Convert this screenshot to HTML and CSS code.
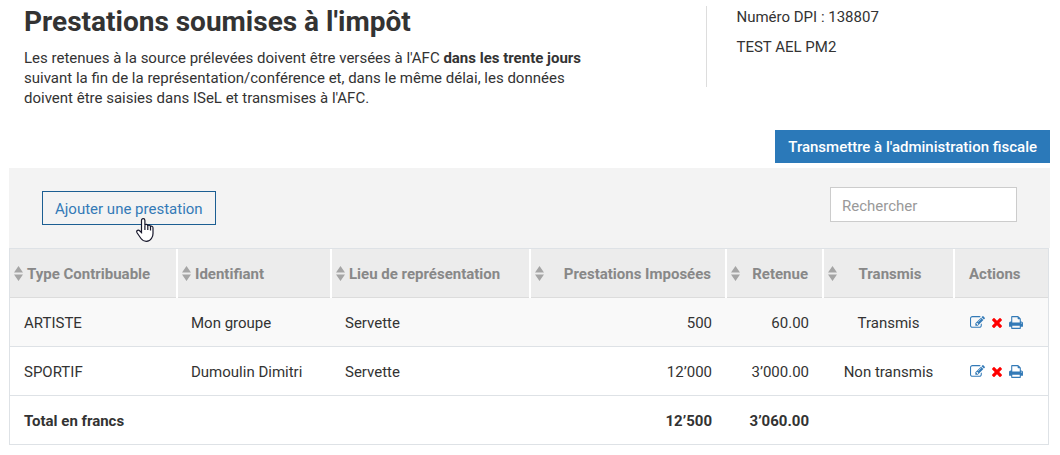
FILE: index.html
```html
<!DOCTYPE html>
<html lang="fr">
<head>
    <meta charset="UTF-8">
    <meta name="viewport" content="width=device-width, initial-scale=1.0">
    <title>Prestations soumises à l'impôt</title>
    <link rel="stylesheet" href="styles.css">
</head>
<body>
    <svg class="sprite" aria-hidden="true">
        <symbol id="icon-sort" viewBox="0 0 9 15">
            <path d="M4.500 0L9 6.500H0zM0 8.500H9L4.500 15z"/>
        </symbol>
        <symbol id="icon-edit" viewBox="0 0 1792 1792">
            <path d="M888 1184l116-116-152-152-116 116v56h96v96h56zm440-720q-16-16-33 1l-350 350q-17 17-1 33t33-1l350-350q17-17 1-33zm80 594v190q0 119-84.5 203.5t-203.5 84.5h-832q-119 0-203.5-84.5t-84.5-203.5v-832q0-119 84.5-203.5t203.5-84.5h832q63 0 117 25 15 7 18 23 3 17-9 29l-49 49q-14 14-32 8-23-6-45-6h-832q-66 0-113 47t-47 113v832q0 66 47 113t113 47h832q66 0 113-47t47-113v-126q0-13 9-22l64-64q15-15 35-7t20 29zm-96-738l288 288-672 672h-288v-288zm444 132l-92 92-288-288 92-92q28-28 68-28t68 28l152 152q28 28 28 68t-28 68z"/>
        </symbol>
        <symbol id="icon-delete" viewBox="192 0 1408 1792">
            <path d="M1490 1322q0 40-28 68l-136 136q-28 28-68 28t-68-28l-294-294-294 294q-28 28-68 28t-68-28l-136-136q-28-28-28-68t28-68l294-294-294-294q-28-28-28-68t28-68l136-136q28-28 68-28t68 28l294 294 294-294q28-28 68-28t68 28l136 136q28 28 28 68t-28 68l-294 294 294 294q28 28 28 68z"/>
        </symbol>
        <symbol id="icon-print" viewBox="64 0 1664 1792">
            <path d="M448 1536h896v-256h-896v256zm0-640h896v-384h-160q-40 0-68-28t-28-68v-160h-640v640zm1152 64q0-26-19-45t-45-19-45 19-19 45 19 45 45 19 45-19 19-45zm128 0v416q0 13-9.5 22.5t-22.5 9.5h-224v160q0 40-28 68t-68 28h-960q-40 0-68-28t-28-68v-160h-224q-13 0-22.5-9.5t-9.500-22.500v-416q0-79 56.500-135.500t135.500-56.500h64v-544q0-40 28-68t68-28h672q40 0 88 20t76 48l152 152q28 28 48 76t20 88v256h64q79 0 135.500 56.500t56.500 135.500z"/>
        </symbol>
    </svg>

    <div class="page">
        <header class="header">
            <div class="intro">
                <h1 class="title">Prestations soumises à l'impôt</h1>
                <p class="intro-text">Les retenues à la source prélevées doivent être versées à l'AFC <strong>dans les trente jours</strong> suivant la fin de la représentation/conférence et, dans le même délai, les données doivent être saisies dans ISeL et transmises à l'AFC.</p>
            </div>
            <div class="debtor">
                <p>Numéro DPI : 138807</p>
                <p>TEST AEL PM2</p>
            </div>
        </header>

        <div class="submit-bar">
            <button type="button" class="button button-primary">Transmettre à l'administration fiscale</button>
        </div>

        <div class="toolbar">
            <button type="button" class="button button-outline">Ajouter une prestation
                <svg class="cursor" viewBox="0 0 18 24" aria-hidden="true">
                    <path d="M5.500 14.500V2.500Q5.500 .7 7.200 .7T8.900 2.500V7.500Q9.100 6.300 10.400 6.400T11.800 7.900Q12.200 6.900 13.300 7.100T14.500 8.600Q14.900 7.900 15.900 8.200T17 9.800V15.500Q17 18.500 15.600 20.200Q13.700 23.300 10.300 23.300Q7 23.300 5 20.500L1.200 15Q.3 13.500 1 12.700Q2.300 11.500 3.900 13Z"/>
                    <path d="M8.900 7.500V12M11.800 8V12M14.500 8.600V12.500"/>
                </svg>
            </button>
            <input type="search" class="search" placeholder="Rechercher" aria-label="Rechercher">
        </div>

        <table class="table">
            <colgroup>
                <col class="col-type">
                <col class="col-id">
                <col class="col-place">
                <col class="col-amount">
                <col class="col-tax">
                <col class="col-status">
                <col class="col-actions">
            </colgroup>
            <thead>
                <tr>
                    <th><button type="button" class="sort"><svg class="sort-icon"><use href="#icon-sort"/></svg><span>Type Contribuable</span></button></th>
                    <th><button type="button" class="sort"><svg class="sort-icon"><use href="#icon-sort"/></svg><span>Identifiant</span></button></th>
                    <th><button type="button" class="sort"><svg class="sort-icon"><use href="#icon-sort"/></svg><span>Lieu de représentation</span></button></th>
                    <th class="number"><button type="button" class="sort"><svg class="sort-icon"><use href="#icon-sort"/></svg><span>Prestations Imposées</span></button></th>
                    <th class="number"><button type="button" class="sort"><svg class="sort-icon"><use href="#icon-sort"/></svg><span>Retenue</span></button></th>
                    <th class="center"><button type="button" class="sort"><svg class="sort-icon"><use href="#icon-sort"/></svg><span>Transmis</span></button></th>
                    <th class="heading-actions">Actions</th>
                </tr>
            </thead>
            <tbody>
                <tr>
                    <td>ARTISTE</td>
                    <td>Mon groupe</td>
                    <td>Servette</td>
                    <td class="number">500</td>
                    <td class="number">60.00</td>
                    <td class="center">Transmis</td>
                    <td>
                        <div class="actions">
                            <button type="button" class="action" aria-label="Modifier"><svg class="icon"><use href="#icon-edit"/></svg></button>
                            <button type="button" class="action action-delete" aria-label="Supprimer"><svg class="icon icon-delete"><use href="#icon-delete"/></svg></button>
                            <button type="button" class="action" aria-label="Imprimer"><svg class="icon icon-print"><use href="#icon-print"/></svg></button>
                        </div>
                    </td>
                </tr>
                <tr>
                    <td>SPORTIF</td>
                    <td>Dumoulin Dimitri</td>
                    <td>Servette</td>
                    <td class="number">12’000</td>
                    <td class="number">3’000.00</td>
                    <td class="center">Non transmis</td>
                    <td>
                        <div class="actions">
                            <button type="button" class="action" aria-label="Modifier"><svg class="icon"><use href="#icon-edit"/></svg></button>
                            <button type="button" class="action action-delete" aria-label="Supprimer"><svg class="icon icon-delete"><use href="#icon-delete"/></svg></button>
                            <button type="button" class="action" aria-label="Imprimer"><svg class="icon icon-print"><use href="#icon-print"/></svg></button>
                        </div>
                    </td>
                </tr>
            </tbody>
            <tfoot>
                <tr>
                    <td colspan="3">Total en francs</td>
                    <td class="number">12’500</td>
                    <td class="number">3’060.00</td>
                    <td></td>
                    <td></td>
                </tr>
            </tfoot>
        </table>
    </div>
</body>
</html>
```

FILE: styles.css
```css
* {
    box-sizing: border-box;
}

body {
    margin: 0;
    background: #fff;
    color: #333;
    font-family: Roboto, "Liberation Sans", sans-serif;
    font-size: 15px;
    line-height: 20px;
}

button,
input {
    font: inherit;
}

button {
    cursor: pointer;
}

.sprite {
    display: none;
}

.page {
    padding: 6px 10px 10px 9px;
}

/* Page heading */
.header {
    display: grid;
    grid-template-columns: minmax(0, 1fr) 33%;
}

.intro {
    padding-left: 15px;
}

.title {
    margin: 0 0 11px;
    font-size: 28px;
    line-height: 31px;
    font-weight: 700;
}

.intro-text {
    max-width: 580px;
    margin: 0;
}

.intro-text strong {
    font-weight: 700;
}

.debtor {
    align-self: start;
    min-height: 81px;
    padding: 1px 0 0 29px;
    border-left: 1px solid #ddd;
}

.debtor p {
    margin: 0 0 10px;
}

.submit-bar {
    display: flex;
    justify-content: flex-end;
    padding: 22px 0 5px;
}

/* Buttons */
.button {
    position: relative;
    padding: 7px 13px 6px;
    border: 0;
    border-radius: 0;
    line-height: 20px;
}

.button-primary {
    background: #2b79b9;
    color: #fff;
    font-weight: 500;
}

.button-outline {
    padding: 7px 12px 5px;
    border: 1px solid #1b5e92;
    background: transparent;
    color: #337ab7;
}

.cursor {
    position: absolute;
    left: 93px;
    top: 26px;
    width: 18px;
    height: 24px;
    fill: #fff;
    stroke: #16162a;
    stroke-width: 1.2;
}

/* Toolbar */
.toolbar {
    display: flex;
    align-items: flex-start;
    justify-content: space-between;
    min-height: 80px;
    padding: 19px 33px;
    background: #f3f3f3;
}

.toolbar .button {
    margin-top: 4px;
}

.search {
    width: 187px;
    height: 35px;
    padding: 7px 11px 5px;
    border: 1px solid #ccc;
    border-radius: 0;
    background: #fff;
    appearance: none;
}

.search::placeholder {
    color: #999;
}

/* Table */
.table {
    width: calc(100% - 1px);
    table-layout: fixed;
    border: 1px solid #dee2e6;
    border-bottom: 0;
    border-spacing: 0;
}

.col-type {
    width: 167px;
}

.col-id {
    width: 154px;
}

.col-amount {
    width: 196px;
}

.col-tax {
    width: 97px;
}

.col-status {
    width: 131px;
}

.col-actions {
    width: 94px;
}

.table th {
    height: 49px;
    padding: 0 4px;
    border: solid #fff;
    border-width: 0 1px;
    background: #ececec;
    box-shadow: inset 0 -1px #dcdcdc;
    color: #888;
    font-weight: 700;
    text-align: left;
}

.table th:first-child {
    border-left: 0;
}

.table th:last-child {
    border-right: 0;
}

.table td {
    height: 49px;
    padding: 2px 14px 0;
    border-bottom: 1px solid #dee2e6;
}

.table tbody tr:nth-child(odd) {
    background: #f9f9f9;
}

.table tfoot {
    font-weight: 700;
}

.table .number {
    text-align: right;
}

.table th.number,
.table th.center {
    padding-right: 14px;
}

.table .center {
    text-align: center;
}

.table .heading-actions {
    padding-left: 14px;
}

.sort {
    display: flex;
    align-items: center;
    gap: 4px;
    width: 100%;
    padding: 0;
    border: 0;
    background: none;
    color: inherit;
    text-align: inherit;
}

.sort span {
    flex: 1;
}

.sort-icon {
    width: 9px;
    height: 15px;
    fill: #a5a5a5;
}

/* Row actions */
.actions {
    display: flex;
    align-items: center;
    gap: 6px;
    padding: 0 0 2px 2px;
}

.action {
    display: flex;
    padding: 0;
    border: 0;
    background: none;
    color: #337ab7;
}

.action-delete {
    color: #f00;
}

.icon {
    width: 15px;
    height: 15px;
    fill: currentColor;
}

.icon-delete {
    width: 12px;
}

.icon-print {
    width: 14px;
}
```
